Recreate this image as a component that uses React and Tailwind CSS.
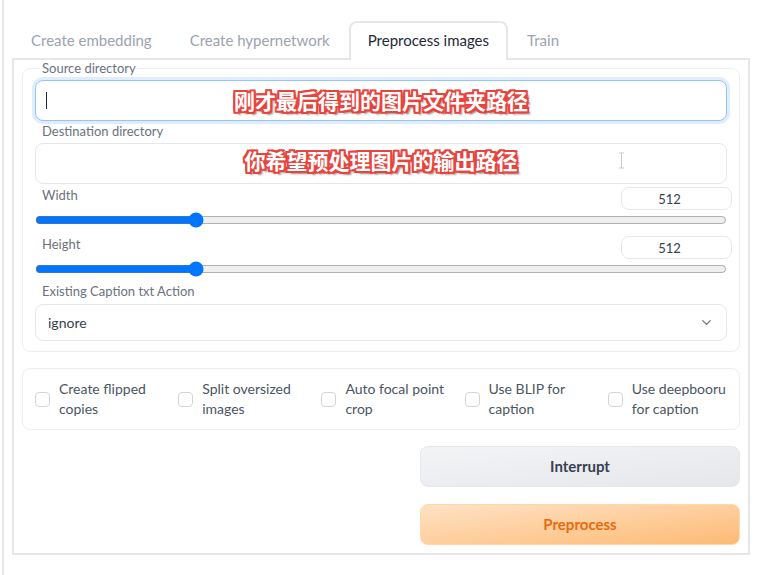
import React from 'react';
import { ChevronDown } from 'lucide-react';

const tabs = ['Create embedding', 'Create hypernetwork', 'Preprocess images', 'Train'];
const activeTab = 2;

const options = [
  ['Create flipped', 'copies'],
  ['Split oversized', 'images'],
  ['Auto focal point', 'crop'],
  ['Use BLIP for', 'caption'],
  ['Use deepbooru', 'for caption'],
];

// white letters, red rim, soft grey drop shadow
const note =
  "absolute inset-0 flex items-center justify-center pointer-events-none font-['Noto_Sans_CJK_SC',sans-serif] font-bold text-white [text-shadow:-2px_-2px_0_#e8433c,2px_-2px_0_#e8433c,-2px_2px_0_#e8433c,2px_2px_0_#e8433c,0_2px_0_#e8433c,0_-2px_0_#e8433c,2px_0_0_#e8433c,-2px_0_0_#e8433c,3px_3px_2px_#8a8a8a]";

const SizeRow = ({ label, value, className = '' }) => (
  <div className={className}>
    <div className="flex justify-between items-start">
      <span className="ml-[7px] text-[13px] leading-[16px] text-[#6b7280]">{label}</span>
      <input
        type="number"
        defaultValue={value}
        className="w-[111px] h-[23px] -mr-[5px] pr-[14px] rounded-lg border border-[#e5e7eb] bg-white text-center text-[13px] text-[#374151] outline-none [appearance:textfield] [&::-webkit-inner-spin-button]:appearance-none"
      />
    </div>
    <input
      type="range"
      min={64}
      max={2048}
      step={8}
      defaultValue={value}
      className="block w-full h-[14px] m-0 mt-[3px]"
    />
  </div>
);

const App = () => {
  return (
    <div className="min-h-[575px] bg-white font-['Lato',sans-serif]">
      <div className="ml-[2px] min-h-[575px] border-l-2 border-[#e5e7eb] pl-[8px] pr-[9px] pt-[21px]">
        {/* tabs */}
        <div className="flex items-start h-[37px]">
          {tabs.map((t, i) => (
            <div
              key={t}
              className={`px-[17px] flex items-center text-[15px] border-2 border-b-0 rounded-t-lg ${
                i === activeTab
                  ? 'h-[39px] pb-[2px] border-[#e5e7eb] bg-white text-[#1f2937] relative z-10'
                  : 'h-[37px] border-transparent text-[#9ca3af]'
              }`}
            >
              {t}
            </div>
          ))}
        </div>

        <div className="border-2 border-[#e5e7eb] px-[8px] pt-[8px] pb-[8px]">
          {/* paths and sizes */}
          <div className="border border-[#eceef1] rounded-lg px-[12px] pb-[10px]">
            <div className="w-fit -mt-[9px] ml-[5px] px-[2px] bg-white text-[13px] leading-[16px] text-[#6b7280]">
              Source directory
            </div>
            <div className="relative mt-[4px] h-[41px] rounded-lg border border-[#93c5fd] ring-[3px] ring-[#e0edfd] bg-white">
              <span className="absolute left-[10px] top-[11px] w-px h-[17px] bg-[#1f2937]" />
              <span className={`${note} text-[21px]`}>刚才最后得到的图片文件夹路径</span>
            </div>

            <div className="mt-[2px] ml-[7px] text-[13px] leading-[16px] text-[#6b7280]">Destination directory</div>
            <div className="relative mt-[4px] h-[41px] rounded-lg border border-[#e5e7eb] bg-white">
              <svg className="absolute left-[582px] top-[8px]" width="7" height="17" viewBox="0 0 7 17" fill="none">
                <path d="M1 1h5M3.5 1v15M1 16h5" stroke="#c9c9c9" strokeWidth="1" />
              </svg>
              <span className={`${note} text-[21px] -mt-[6px]`}>你希望预处理图片的输出路径</span>
            </div>

            <SizeRow label="Width" value={512} className="mt-[3px]" />
            <SizeRow label="Height" value={512} className="mt-[9px]" />

            <div className="mt-[7px] ml-[7px] text-[13px] leading-[16px] text-[#6b7280]">Existing Caption txt Action</div>
            <div className="mt-[5px] h-[37px] rounded-lg border border-[#e5e7eb] bg-white flex items-center justify-between pl-[12px] pr-[12px]">
              <span className="text-[14px] text-[#374151]">ignore</span>
              <ChevronDown size={15} strokeWidth={2} className="text-[#6b7280]" />
            </div>
          </div>

          {/* options */}
          <div className="mt-[16px] border border-[#eceef1] rounded-lg px-[12px] py-[10px] grid grid-cols-5 gap-x-[24px]">
            {options.map(([a, b]) => (
              <div key={a} className="flex items-center gap-[9px]">
                <span className="shrink-0 w-[15px] h-[15px] rounded-[4px] border border-[#d1d5db] bg-white" />
                <span className="text-[14px] leading-[20px] text-[#4b5563] whitespace-nowrap">
                  {a}
                  <br />
                  {b}
                </span>
              </div>
            ))}
          </div>

          {/* actions */}
          <div className="mt-[16px] flex flex-col items-end gap-[17px]">
            <button
              type="button"
              className="w-[320px] h-[41px] rounded-lg border border-[#e5e7eb] bg-gradient-to-br from-[#f3f4f6] to-[#e5e7eb] text-[15px] font-bold text-[#374151]"
            >
              Interrupt
            </button>
            <button
              type="button"
              className="w-[320px] h-[41px] rounded-lg border border-[#fed7aa] bg-gradient-to-br from-[#fee2c4] to-[#fdba74] text-[15px] font-bold text-[#ea6a0c]"
            >
              Preprocess
            </button>
          </div>
        </div>
      </div>
    </div>
  );
};

export default App;
